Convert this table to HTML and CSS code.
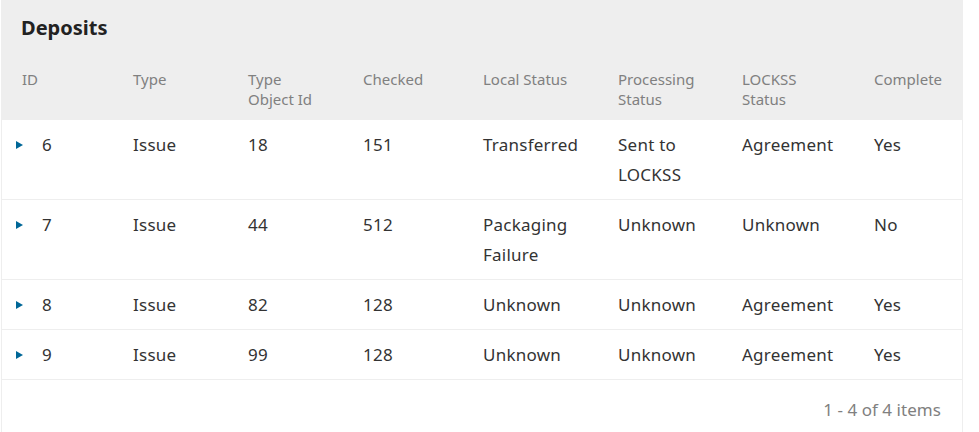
FILE: index.html
```html
<!DOCTYPE html>
<html>
<head>
<meta charset="utf-8">
<link rel="stylesheet" href="styles.css">
</head>
<body>
<div class="panel">
  <div class="panel-head">
    <h2 class="title">Deposits</h2>
    <div class="row head-row">
      <div class="cell">ID</div>
      <div class="cell">Type</div>
      <div class="cell">Type<br>Object Id</div>
      <div class="cell">Checked</div>
      <div class="cell">Local Status</div>
      <div class="cell">Processing<br>Status</div>
      <div class="cell">LOCKSS<br>Status</div>
      <div class="cell">Complete</div>
    </div>
  </div>
  <div class="row body-row">
    <div class="cell id-cell"><span class="arrow"></span>6</div>
    <div class="cell">Issue</div>
    <div class="cell">18</div>
    <div class="cell">151</div>
    <div class="cell">Transferred</div>
    <div class="cell">Sent to<br>LOCKSS</div>
    <div class="cell">Agreement</div>
    <div class="cell">Yes</div>
  </div>
  <div class="row body-row">
    <div class="cell id-cell"><span class="arrow"></span>7</div>
    <div class="cell">Issue</div>
    <div class="cell">44</div>
    <div class="cell">512</div>
    <div class="cell">Packaging<br>Failure</div>
    <div class="cell">Unknown</div>
    <div class="cell">Unknown</div>
    <div class="cell">No</div>
  </div>
  <div class="row body-row">
    <div class="cell id-cell"><span class="arrow"></span>8</div>
    <div class="cell">Issue</div>
    <div class="cell">82</div>
    <div class="cell">128</div>
    <div class="cell">Unknown</div>
    <div class="cell">Unknown</div>
    <div class="cell">Agreement</div>
    <div class="cell">Yes</div>
  </div>
  <div class="row body-row">
    <div class="cell id-cell"><span class="arrow"></span>9</div>
    <div class="cell">Issue</div>
    <div class="cell">99</div>
    <div class="cell">128</div>
    <div class="cell">Unknown</div>
    <div class="cell">Unknown</div>
    <div class="cell">Agreement</div>
    <div class="cell">Yes</div>
  </div>
  <div class="footer">1 - 4 of 4 items</div>
</div>
</body>
</html>
```

FILE: styles.css
```css
* { box-sizing: border-box; }
html, body { margin: 0; padding: 0; background: #fff; }
body {
  font-family: "Noto Sans", "Open Sans", sans-serif;
  padding-left: 1px;
}
.panel {
  width: 962px;
  border-left: 1px solid #eee;
  border-right: 1px solid #eee;
  min-height: 432px;
}
.panel-head {
  background: #eee;
  padding-top: 14px;
  height: 120px;
}
.title {
  margin: 0 0 0 19px;
  font-size: 20px;
  font-weight: 700;
  line-height: 28px;
  color: #222;
}
.row {
  display: grid;
  grid-template-columns: 111px 115px 115px 120px 135px 124px 132px 108px;
}
.head-row {
  margin-top: 27px;
  font-size: 15px;
  line-height: 20px;
  color: #808080;
}
.head-row .cell { padding-left: 20px; }
.body-row {
  font-size: 17px;
  letter-spacing: 0.24px;
  line-height: 30px;
  color: #333;
  border-bottom: 1px solid #eee;
  padding: 10px 0 9px;
}
.body-row .cell { padding-left: 20px; }
.body-row .id-cell {
  padding-left: 14px;
  display: flex;
  align-items: center;
  align-self: start;
  height: 30px;
}
.arrow {
  display: inline-block;
  width: 0;
  height: 0;
  border-top: 4.5px solid transparent;
  border-bottom: 4.5px solid transparent;
  border-left: 7px solid #006798;
  margin-right: 19px;
  margin-top: -1px;
}
.footer {
  text-align: right;
  padding: 17px 21px 0 0;
  font-size: 17px;
  letter-spacing: 0.05px;
  line-height: 26px;
  color: #808080;
}
```
